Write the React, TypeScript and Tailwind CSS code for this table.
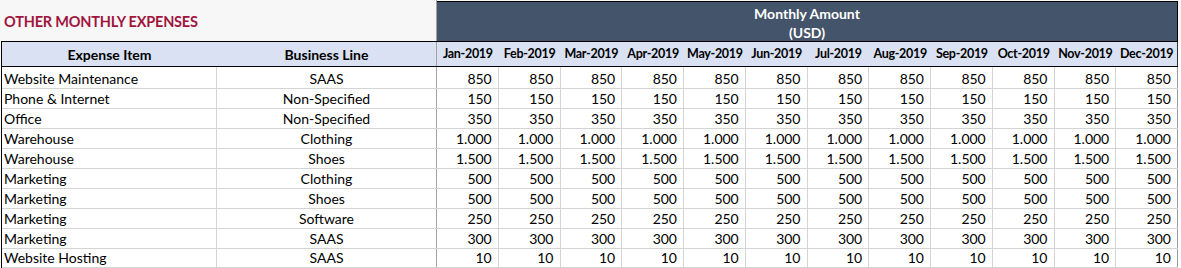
import React from "react";

const months = [
  "Jan-2019","Feb-2019","Mar-2019","Apr-2019","May-2019","Jun-2019",
  "Jul-2019","Aug-2019","Sep-2019","Oct-2019","Nov-2019","Dec-2019",
];

const rows: [string, string, string][] = [
  ["Website Maintenance", "SAAS", "850"],
  ["Phone & Internet", "Non-Specified", "150"],
  ["Office", "Non-Specified", "350"],
  ["Warehouse", "Clothing", "1.000"],
  ["Warehouse", "Shoes", "1.500"],
  ["Marketing", "Clothing", "500"],
  ["Marketing", "Shoes", "500"],
  ["Marketing", "Software", "250"],
  ["Marketing", "SAAS", "300"],
  ["Website Hosting", "SAAS", "10"],
];

const grid = "grid grid-cols-[215px_220px_repeat(12,minmax(0,1fr))]";

export default function App() {
  return (
    <div className="w-[1181px] h-[268px] overflow-hidden bg-white text-black font-['Lato','Liberation_Sans',sans-serif] text-[14px]">
      {/* Title row */}
      <div className="flex h-[41px]">
        <div className="w-[436px] bg-[#f7f7f7] flex items-center pl-[4px] pt-[3px]">
          <span className="font-bold text-[#a0153e] text-[14.5px] tracking-[-0.2px]">OTHER MONTHLY EXPENSES</span>
        </div>
        <div className="w-[1px] bg-[#a3a3a3]" />
        <div className="w-[741px] bg-[#f7f7f7] pt-[1px]">
          <div className="h-[40px] bg-[#44546a] border-t border-r border-black flex flex-col items-center justify-center pt-[3px] text-white font-bold leading-[19px]">
            <span>Monthly Amount</span>
            <span>(USD)</span>
          </div>
        </div>
        <div className="flex-1 bg-[#f7f7f7]" />
      </div>

      {/* Table */}
      <div className="pl-[1px]">
        <div className="w-[1177px] border-l border-black">
          {/* Header row */}
          <div className={`${grid} h-[26px] bg-[#d9e1f2] border-t border-b border-black font-bold`}>
            <div className="flex items-center justify-center pt-[1px]">Expense Item</div>
            <div className="flex items-center justify-center pt-[1px] border-r border-[#a3a3a3]">Business Line</div>
            {months.map((m, i) => (
              <div
                key={m}
                className={`flex items-center justify-center pt-[1px] text-[12.5px] tracking-[-0.3px] ${i === 11 ? "border-r border-[#333333]" : ""}`}
              >
                {m}
              </div>
            ))}
          </div>
          {/* Data rows */}
          {rows.map((r, ri) => (
            <div
              key={ri}
              className={`${grid} h-[20px] ${ri > 0 ? "border-t border-[#d4d4d4]" : "h-[21px]"} ${ri === rows.length - 1 ? "border-b border-[#d4d4d4]" : ""}`}
            >
              <div className="flex items-end pl-[2px] pb-[1px] border-r border-[#d4d4d4] whitespace-nowrap leading-[17px]">{r[0]}</div>
              <div className="flex items-end justify-center pb-[1px] border-r border-[#a3a3a3] whitespace-nowrap leading-[17px]">{r[1]}</div>
              {months.map((m, i) => (
                <div
                  key={m}
                  className={`flex items-end justify-end pr-[6px] pb-[1px] border-r leading-[17px] ${i === 11 ? "border-[#9a9a9a]" : "border-[#d4d4d4]"}`}
                >
                  {r[2]}
                </div>
              ))}
            </div>
          ))}
        </div>
      </div>
    </div>
  );
}
